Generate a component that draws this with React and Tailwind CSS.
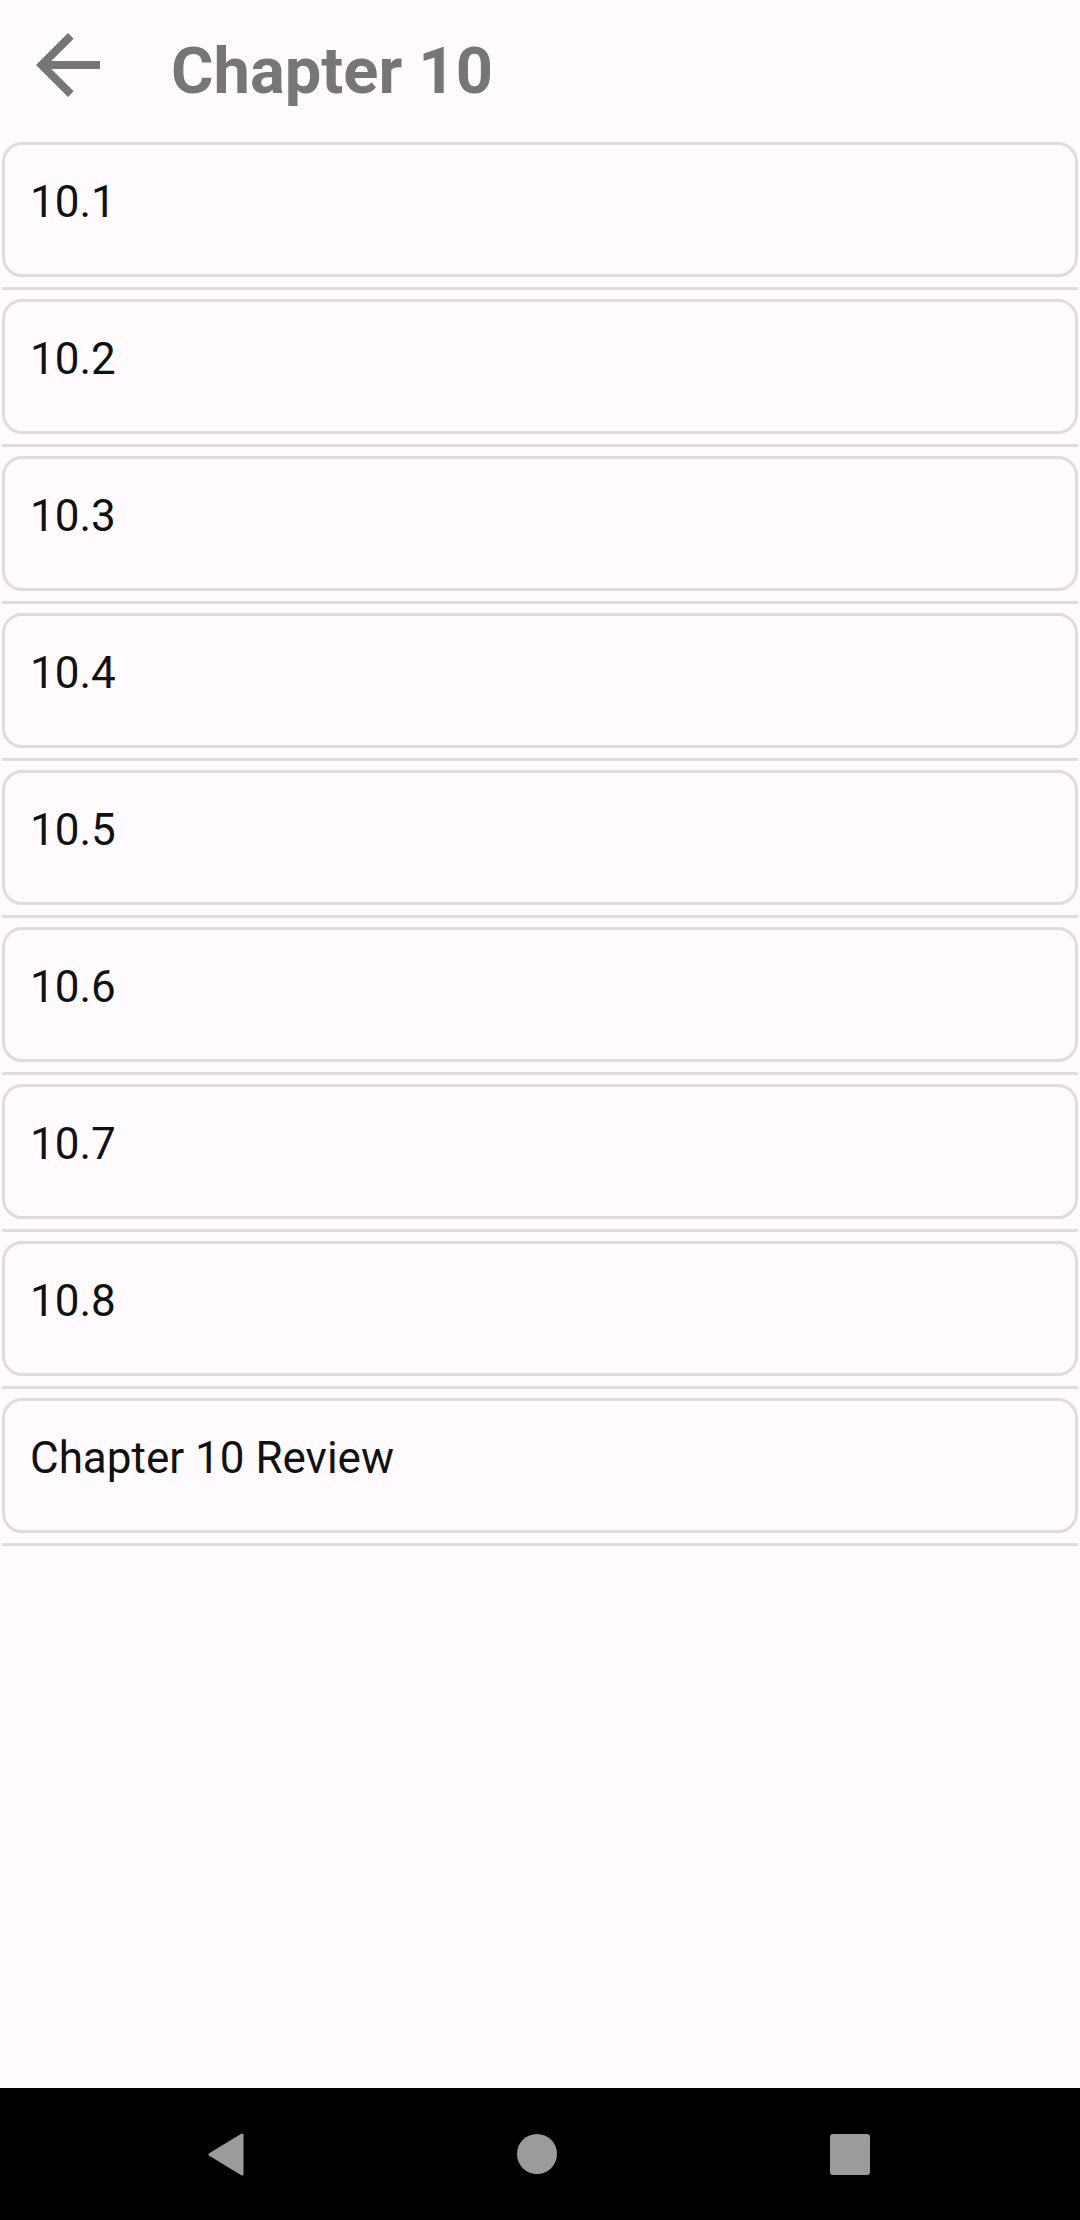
import React from "react";

const sections = ["10.1", "10.2", "10.3", "10.4", "10.5", "10.6", "10.7", "10.8", "Chapter 10 Review"];

const SectionCard = ({ label }) => {
  return (
    <div>
      <div className="mx-[2px] h-[135px] rounded-[20px] border-[3px] border-[#dedcdf] bg-[#fffbfe] pl-[25px] pt-[31px]">
        <div className="text-[44px] leading-[52px] text-[#111111]">{label}</div>
      </div>
      <div className="mt-[10px] mb-[9px] h-[3px] mx-[2px] bg-[#dedcdf]" />
    </div>
  );
};

const App = () => {
  return (
    <div
      className="min-h-[2220px] w-[1080px] flex flex-col bg-[#fffbfe]"
      style={{ fontFamily: "Roboto, 'Noto Sans', sans-serif" }}
    >
      <div className="flex-1">
        <div className="flex items-start h-[142px]">
          <svg
            className="ml-[20px] mt-[17px]"
            width="96"
            height="96"
            viewBox="0 0 24 24"
            fill="#767578"
          >
            <path d="M20 11H7.83l5.59-5.59L12 4l-8 8 8 8 1.41-1.41L7.83 13H20v-2z" />
          </svg>
          <h1 className="ml-[55px] mt-[33px] text-[65px] leading-[76px] font-bold text-[#767578]">
            Chapter 10
          </h1>
        </div>
        <div>
          {sections.map((s) => (
            <SectionCard key={s} label={s} />
          ))}
        </div>
      </div>
      <div className="h-[132px] bg-black flex items-center pl-[207px] gap-[273px]">
        <svg width="37" height="43" viewBox="0 0 37 43">
          <path d="M35 2 L3 21.5 L35 41 Z" fill="#9b9a9d" stroke="#9b9a9d" strokeWidth="3" strokeLinejoin="round" />
        </svg>
        <div className="w-[40px] h-[40px] rounded-full bg-[#9b9a9d]" />
        <div className="w-[40px] h-[41px] rounded-[3px] bg-[#9b9a9d]" />
      </div>
    </div>
  );
};

export default App;
